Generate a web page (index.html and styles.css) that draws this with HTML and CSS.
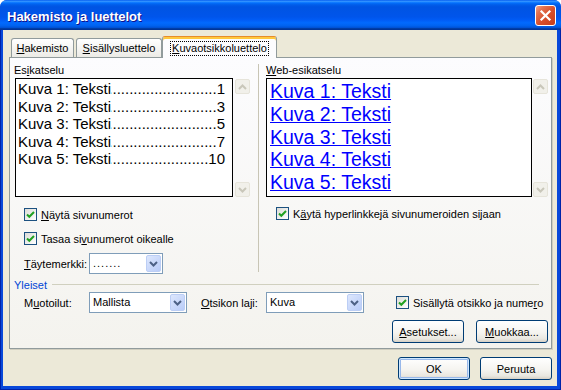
FILE: index.html
```html
<!DOCTYPE html>
<html lang="fi">
<head>
    <meta charset="UTF-8">
    <meta name="viewport" content="width=device-width, initial-scale=1.0">
    <title>Hakemisto ja luettelot</title>
    <link rel="stylesheet" href="styles.css">
</head>
<body>
    <div class="window">
        <div class="titlebar">
            <span class="title">Hakemisto ja luettelot</span>
            <span class="close-btn">
                <svg width="13" height="13" viewBox="0 0 13 13"><path d="M2.5 2.5 L10.5 10.5 M10.5 2.5 L2.5 10.5" stroke="#fff" stroke-width="2.2" stroke-linecap="square"/></svg>
            </span>
        </div>
        <div class="frame">
            <div class="client">
                <div class="tabs">
                    <div class="tab tab-index"><u>H</u>akemisto</div>
                    <div class="tab tab-toc"><u>S</u>isällysluettelo</div>
                    <div class="tab active"><span class="focus"><u>K</u>uvaotsikkoluettelo</span></div>
                </div>

                <div class="panel">
                    <div class="columns">
                        <!-- Print preview -->
                        <div class="col col-left">
                            <div class="label">Es<u>i</u>katselu</div>
                            <div class="preview-row">
                                <div class="preview print">
                                    <div class="entry"><span>Kuva 1: Teksti</span><span class="leader"></span><span>1</span></div>
                                    <div class="entry"><span>Kuva 2: Teksti</span><span class="leader"></span><span>3</span></div>
                                    <div class="entry"><span>Kuva 3: Teksti</span><span class="leader"></span><span>5</span></div>
                                    <div class="entry"><span>Kuva 4: Teksti</span><span class="leader"></span><span>7</span></div>
                                    <div class="entry"><span>Kuva 5: Teksti</span><span class="leader"></span><span>10</span></div>
                                </div>
                                <div class="scroll">
                                    <span class="arrow"><svg width="9" height="6" viewBox="0 0 9 6"><path d="M1 5 L4.5 1.5 L8 5" fill="none" stroke="#C9C7BA" stroke-width="2"/></svg></span>
                                    <span class="arrow"><svg width="9" height="6" viewBox="0 0 9 6"><path d="M1 1 L4.5 4.5 L8 1" fill="none" stroke="#C9C7BA" stroke-width="2"/></svg></span>
                                </div>
                            </div>
                            <div class="check check-first">
                                <span class="cb"><svg width="9" height="9" viewBox="0 0 9 9"><path d="M1 4.5 L3.3 6.8 L8 2" fill="none" stroke="#21A121" stroke-width="2"/></svg></span>
                                <span><u>N</u>äytä sivunumerot</span>
                            </div>
                            <div class="check">
                                <span class="cb"><svg width="9" height="9" viewBox="0 0 9 9"><path d="M1 4.5 L3.3 6.8 L8 2" fill="none" stroke="#21A121" stroke-width="2"/></svg></span>
                                <span>Tasaa si<u>v</u>unumerot oikealle</span>
                            </div>
                            <div class="field-row leader-row">
                                <span class="field-label"><u>T</u>äytemerkki:</span>
                                <div class="select select-small">
                                    <span class="select-text dots">.......</span>
                                    <span class="select-btn"><svg width="9" height="6" viewBox="0 0 9 6"><path d="M1 1 L4.5 4.5 L8 1" fill="none" stroke="#4D6185" stroke-width="2"/></svg></span>
                                </div>
                            </div>
                        </div>

                        <div class="sep"></div>

                        <!-- Web preview -->
                        <div class="col col-right">
                            <div class="label"><u>W</u>eb-esikatselu</div>
                            <div class="preview-row">
                                <div class="preview web">
                                    <div class="link">Kuva 1: Teksti</div>
                                    <div class="link">Kuva 2: Teksti</div>
                                    <div class="link">Kuva 3: Teksti</div>
                                    <div class="link">Kuva 4: Teksti</div>
                                    <div class="link">Kuva 5: Teksti</div>
                                </div>
                                <div class="scroll">
                                    <span class="arrow"><svg width="9" height="6" viewBox="0 0 9 6"><path d="M1 5 L4.5 1.5 L8 5" fill="none" stroke="#C9C7BA" stroke-width="2"/></svg></span>
                                    <span class="arrow"><svg width="9" height="6" viewBox="0 0 9 6"><path d="M1 1 L4.5 4.5 L8 1" fill="none" stroke="#C9C7BA" stroke-width="2"/></svg></span>
                                </div>
                            </div>
                            <div class="check check-web">
                                <span class="cb"><svg width="9" height="9" viewBox="0 0 9 9"><path d="M1 4.5 L3.3 6.8 L8 2" fill="none" stroke="#21A121" stroke-width="2"/></svg></span>
                                <span>K<u>ä</u>ytä hyperlinkkejä sivunumeroiden sijaan</span>
                            </div>
                        </div>
                    </div>

                    <!-- General group -->
                    <div class="group-head">
                        <span class="group-title">Yleiset</span>
                        <span class="group-line"></span>
                    </div>
                    <div class="field-row general-row">
                        <span class="field-label">M<u>u</u>otoilut:</span>
                        <div class="select select-wide">
                            <span class="select-text">Mallista</span>
                            <span class="select-btn"><svg width="9" height="6" viewBox="0 0 9 6"><path d="M1 1 L4.5 4.5 L8 1" fill="none" stroke="#4D6185" stroke-width="2"/></svg></span>
                        </div>
                        <span class="field-label label-caption"><u>O</u>tsikon laji:</span>
                        <div class="select select-wide">
                            <span class="select-text">Kuva</span>
                            <span class="select-btn"><svg width="9" height="6" viewBox="0 0 9 6"><path d="M1 1 L4.5 4.5 L8 1" fill="none" stroke="#4D6185" stroke-width="2"/></svg></span>
                        </div>
                        <div class="check check-caption">
                            <span class="cb"><svg width="9" height="9" viewBox="0 0 9 9"><path d="M1 4.5 L3.3 6.8 L8 2" fill="none" stroke="#21A121" stroke-width="2"/></svg></span>
                            <span>Sisällytä otsikko ja nume<u>r</u>o</span>
                        </div>
                    </div>
                    <div class="panel-buttons">
                        <div class="btn"><span><u>A</u>setukset...</span></div>
                        <div class="btn"><span><u>M</u>uokkaa...</span></div>
                    </div>
                </div>

                <div class="dialog-buttons">
                    <div class="btn default">OK</div>
                    <div class="btn">Peruuta</div>
                </div>
            </div>
        </div>
    </div>
</body>
</html>
```

FILE: styles.css
```css
* {
    box-sizing: border-box;
}
body {
    margin: 0;
    padding: 0;
    background-color: #ffffff;
    font-family: "Liberation Sans", Arial, sans-serif;
    font-size: 11px;
    color: #000000;
}
u {
    text-decoration: underline;
}
/* Window frame */
.window {
    width: 561px;
    height: 390px;
    display: flex;
    flex-direction: column;
    border-radius: 7px 7px 0 0;
    overflow: hidden;
    background-color: #0848DA;
}
.titlebar {
    flex: none;
    height: 30px;
    display: flex;
    align-items: center;
    justify-content: space-between;
    padding: 2px 5px 0 7px;
    background: linear-gradient(to bottom, #0058EE 0%, #3593FF 4%, #288EFF 6%, #127DFF 8%, #036FFC 10%, #0262EE 14%, #0057E5 20%, #0054E3 24%, #0055EB 56%, #005BF5 66%, #026AFE 76%, #0062EF 86%, #0052D6 92%, #0040AB 94%, #003092 100%);
}
.title {
    color: white;
    font-weight: bold;
    font-size: 13px;
    text-shadow: 1px 1px #0F1089;
}
.close-btn {
    width: 21px;
    height: 21px;
    margin-top: -2px;
    border: 1px solid #ffffff;
    border-radius: 3px;
    display: flex;
    align-items: center;
    justify-content: center;
    background: linear-gradient(135deg, #F2A58C 0%, #E47352 22%, #D64E2B 55%, #C63D19 100%);
}
.frame {
    flex: 1;
    display: flex;
    padding: 0 4px 4px 3px;
    box-shadow: inset 1px 0 #0022A8, inset -1px 0 #0022A8, inset 0 -1px #0022A8;
}
.client {
    flex: 1;
    display: flex;
    flex-direction: column;
    background-color: #ECE9D8;
    padding: 6px 5px 0 6px;
}
/* Tabs */
.tabs {
    display: flex;
    align-items: flex-end;
    height: 21px;
    padding-left: 2px;
    position: relative;
    z-index: 1;
}
.tab {
    height: 19px;
    border: 1px solid #919B9C;
    border-bottom: none;
    border-radius: 3px 3px 0 0;
    background: linear-gradient(#FFFFFF, #ECEBE6);
    display: flex;
    align-items: center;
    justify-content: center;
}
.tab-index {
    width: 63px;
}
.tab-toc {
    width: 86px;
    margin-left: 2px;
}
.tab.active {
    width: 115px;
    height: 22px;
    margin-bottom: -1px;
    border-top: 1px solid #E68B2C;
    box-shadow: inset 0 2px #FFC83C;
    background: #FCFCFE;
    padding-top: 1px;
}
.focus {
    outline: 1px dotted #000;
    padding: 0 1px;
    line-height: 13px;
}
/* Tab page */
.panel {
    height: 292px;
    border: 1px solid #919B9C;
    background: linear-gradient(#FCFCFE, #F4F3EE);
    padding: 6px 0 0 4px;
    box-shadow: 1px 1px #D0CEBF;
}
.columns {
    display: flex;
}
.col-left {
    width: 244px;
}
.col-right {
    flex: 1;
    padding-left: 7px;
}
.sep {
    width: 1px;
    margin-bottom: 2px;
    background-color: #C8C5B5;
}
.label {
    height: 13px;
    line-height: 13px;
}
.preview-row {
    display: flex;
    margin-top: 1px;
    height: 119px;
}
.col-left .preview-row {
    margin-left: 1px;
    gap: 2px;
}
.col-right .preview-row {
    gap: 1px;
}
.preview {
    border: 1px solid #000;
    background: #fff;
    overflow: hidden;
}
.print {
    width: 218px;
    padding: 1px 7px 0 2px;
    font-size: 15px;
    line-height: 17.6px;
}
.entry {
    display: flex;
    white-space: nowrap;
}
.leader {
    flex: 1;
    overflow: hidden;
    direction: rtl;
}
.leader::before {
    content: "..............................................................";
}
.web {
    width: 266px;
    padding: 1px 0 0 3px;
    font-size: 19.5px;
    line-height: 22.8px;
}
.link {
    color: #0000FF;
    text-decoration: underline;
    white-space: nowrap;
}
.scroll {
    width: 15px;
    display: flex;
    flex-direction: column;
    justify-content: space-between;
    padding-top: 1px;
}
.arrow {
    width: 15px;
    height: 15px;
    border: 1px solid #E6E4DA;
    border-radius: 2px;
    background: #F1F0EA;
    display: flex;
    align-items: center;
    justify-content: center;
}
/* Checkboxes */
.check {
    display: flex;
    align-items: center;
    height: 13px;
    white-space: nowrap;
}
.cb {
    flex: none;
    width: 13px;
    height: 13px;
    border: 1px solid #1C5180;
    background: linear-gradient(135deg, #DCDCD7, #FFFFFF);
    display: flex;
    align-items: center;
    justify-content: center;
    margin-right: 4px;
}
.col-left .check {
    margin: 11px 0 0 10px;
}
.check-web {
    margin: 10px 0 0 10px;
}
/* Combo boxes */
.field-row {
    display: flex;
    align-items: center;
}
.leader-row {
    margin: 8px 0 0 10px;
}
.field-label {
    width: 65px;
    white-space: nowrap;
}
.select {
    height: 21px;
    border: 1px solid #7F9DB9;
    background: #fff;
    padding: 1px;
    display: flex;
}
.select-small {
    width: 74px;
}
.select-wide {
    width: 98px;
}
.select-text {
    flex: 1;
    padding-left: 2px;
    line-height: 17px;
    white-space: nowrap;
}
.dots {
    letter-spacing: 1px;
}
.select-btn {
    width: 15px;
    height: 17px;
    border: 1px solid #BCCEF5;
    border-radius: 2px;
    background: linear-gradient(135deg, #DDE7FD, #B9CCF8);
    display: flex;
    align-items: center;
    justify-content: center;
}
/* Group */
.group-head {
    display: flex;
    align-items: center;
    height: 13px;
    margin-top: 4px;
    padding-right: 12px;
}
.group-title {
    color: #0046D5;
}
.group-line {
    flex: 1;
    height: 1px;
    margin-left: 5px;
    background-color: #D0D0BF;
}
.general-row {
    margin: 1px 0 0 10px;
}
.label-caption {
    margin-left: 14px;
}
.check-caption {
    margin-left: 32px;
}
/* Buttons */
.panel-buttons {
    display: flex;
    justify-content: flex-end;
    gap: 12px;
    margin-top: 7px;
    padding-right: 3px;
}
.dialog-buttons {
    display: flex;
    justify-content: flex-end;
    gap: 10px;
    margin-top: 8px;
}
.btn {
    width: 72px;
    height: 23px;
    border: 1px solid #003C74;
    border-radius: 3px;
    background: linear-gradient(#FFFFFF 0%, #F5F4F0 55%, #E9E7E0 85%, #D6D0C5 100%);
    display: flex;
    align-items: center;
    justify-content: center;
}
.btn.default {
    box-shadow: inset 0 0 0 1px #CEE7FF, inset 0 0 0 2px #98B8EA;
}
```
